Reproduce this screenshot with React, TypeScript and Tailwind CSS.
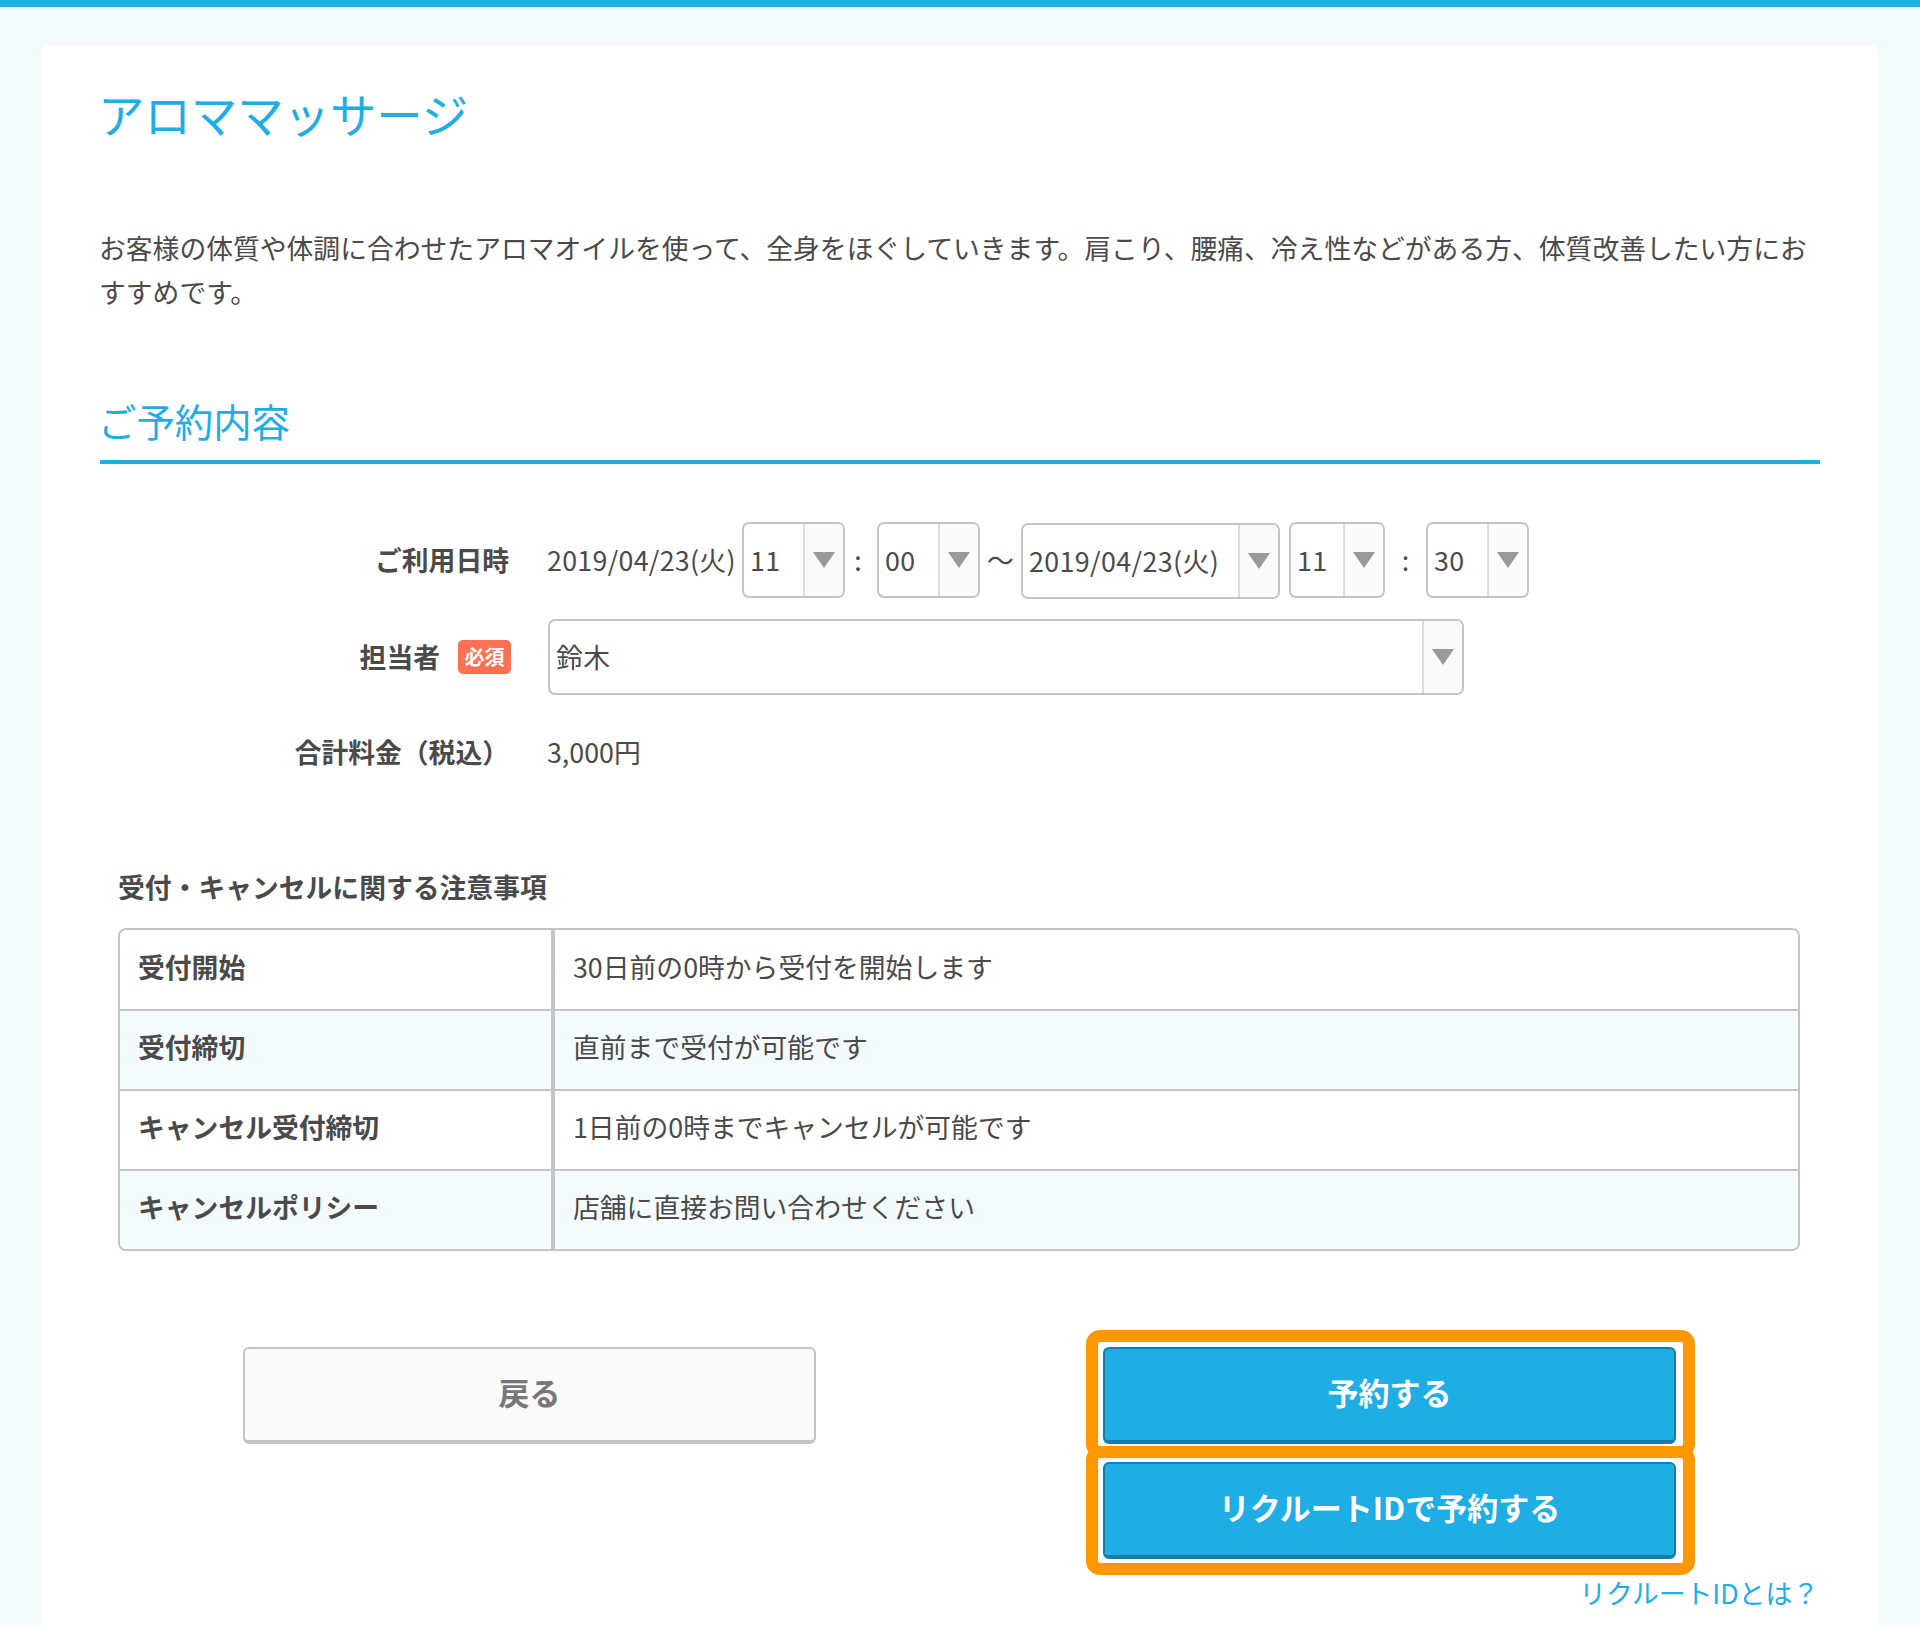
import React from 'react';

const rules = [
  { label: '受付開始', text: '30日前の0時から受付を開始します' },
  { label: '受付締切', text: '直前まで受付が可能です' },
  { label: 'キャンセル受付締切', text: '1日前の0時までキャンセルが可能です' },
  { label: 'キャンセルポリシー', text: '店舗に直接お問い合わせください' },
];

function Arrow() {
  return (
    <svg className="w-[24px] h-[18px]" viewBox="0 0 24 18">
      <path d="M1 1H23L12 17Z" fill="#999999" />
    </svg>
  );
}

// fake select, the arrow cell is the same on all of them
function Select({ value, className }: { value: string; className: string }) {
  return (
    <div className={`flex h-[76px] shrink-0 overflow-hidden rounded-[7px] border-2 border-[#c4c4c4] ${className}`}>
      <div className="flex flex-1 items-center pl-[6px] tracking-[0.4px]">{value}</div>
      <div className="flex w-[40px] items-center justify-center border-l-2 border-[#dddddd] bg-[#fafafa]">
        <Arrow />
      </div>
    </div>
  );
}

function Label({ children }: { children: React.ReactNode }) {
  return <div className="flex w-[409px] shrink-0 items-center justify-end gap-[18px] font-bold">{children}</div>;
}

function PrimaryButton({ children }: { children: React.ReactNode }) {
  return (
    <button className="flex h-[97px] w-[573px] items-center justify-center rounded-[6px] border-2 border-b-[4px] border-[#187da6] bg-[#1eade5] pb-[5px] text-[31px] font-bold text-white">
      {children}
    </button>
  );
}

export default function App() {
  return (
    <div className="h-[1627px] overflow-hidden border-t-[7px] border-[#1eade5] bg-[#f3fbff] font-['Noto_Sans_CJK_JP','Liberation_Sans',sans-serif] text-[26.8px] leading-[44px] text-[#4a4a4a]">
      <div className="mx-[42px] mt-[38px] h-[1600px] rounded-t-[8px] bg-white px-[58px] pt-[38px]">
        <h1 className="-ml-[2px] text-[46.4px] leading-[60px] text-[#1eade5]">アロママッサージ</h1>
        <p className="-ml-[1px] mt-[83px]">
          お客様の体質や体調に合わせたアロマオイルを使って、全身をほぐしていきます。肩こり、腰痛、冷え性などがある方、体質改善したい方におすすめです。
        </p>
        <h2 className="mt-[81px] border-b-4 border-[#1eade5] pb-[15px] text-[38.4px] leading-[50px] text-[#1eade5]">
          <span className="-ml-[2px] block">ご予約内容</span>
        </h2>

        <div className="mt-[56px] flex items-center">
          <Label>ご利用日時</Label>
          <div className="ml-[38px] flex items-center">
            <span className="w-[195px] shrink-0 tracking-[0.3px]">2019/04/23(火)</span>
            <Select value="11" className="w-[103px]" />
            <span className="w-[32px] pr-[6px] text-center">:</span>
            <Select value="00" className="w-[103px]" />
            <span className="w-[41px] text-center">〜</span>
            <Select value="2019/04/23(火)" className="mt-[3px] w-[259px]" />
            <span className="w-[9px]" />
            <Select value="11" className="w-[96px]" />
            <span className="w-[41px] text-center">:</span>
            <Select value="30" className="w-[103px]" />
          </div>
        </div>

        <div className="mt-[20px] flex items-center">
          <Label>
            担当者
            <span className="-mr-[2px] flex h-[34px] w-[53px] items-center justify-center rounded-[5px] bg-[#ff7052] text-[20px] font-bold text-white">必須</span>
          </Label>
          <Select value="鈴木" className="ml-[39px] w-[916px]" />
        </div>

        <div className="mt-[35px] flex">
          <Label>合計料金（税込）</Label>
          <div className="ml-[38px]">3,000円</div>
        </div>

        <h3 className="ml-[18px] mt-[91px] font-bold">受付・キャンセルに関する注意事項</h3>
        <div className="ml-[18px] mr-[20px] mt-[19px] overflow-hidden rounded-[8px] border-2 border-[#c4c4c4]">
          <table className="w-full table-fixed border-separate border-spacing-0">
            <tbody>
              {rules.map((r, i) => (
                <tr key={r.label} className={i % 2 === 1 ? 'bg-[#f3fbff]' : 'bg-white'}>
                  <th className={`w-[435px] border-r-4 border-[#c4c4c4] pb-[6px] pl-[18px] text-left font-bold ${i === 0 ? 'h-[79px]' : 'h-[80px] border-t-2'}`}>
                    {r.label}
                  </th>
                  <td className={`border-[#c4c4c4] pb-[6px] pl-[18px] ${i === 0 ? 'h-[79px]' : 'h-[80px] border-t-2'}`}>{r.text}</td>
                </tr>
              ))}
            </tbody>
          </table>
        </div>

        <div className="mt-[79px] flex">
          <button className="ml-[143px] mt-[17px] flex h-[97px] w-[573px] items-center justify-center rounded-[6px] border-2 border-b-[4px] border-[#c4c4c4] bg-[#fafafa] pb-[5px] text-[31px] font-bold text-[#777777]">
            戻る
          </button>
          <div className="ml-[270px] w-[734px]">
            <div className="w-[609px] rounded-[14px] border-[12px] border-[#ff9800] bg-white pb-[2px] pl-[5px] pr-[7px] pt-[5px]">
              <PrimaryButton>予約する</PrimaryButton>
            </div>
            <div className="-mt-[12px] w-[609px] rounded-[14px] border-[12px] border-[#ff9800] bg-white pb-[4px] pl-[5px] pr-[7px] pt-[4px]">
              <PrimaryButton>リクルートIDで予約する</PrimaryButton>
            </div>
            <div className="pr-[1px] text-right leading-[36px] text-[#1eade5]">リクルートIDとは？</div>
          </div>
        </div>
      </div>
    </div>
  );
}
